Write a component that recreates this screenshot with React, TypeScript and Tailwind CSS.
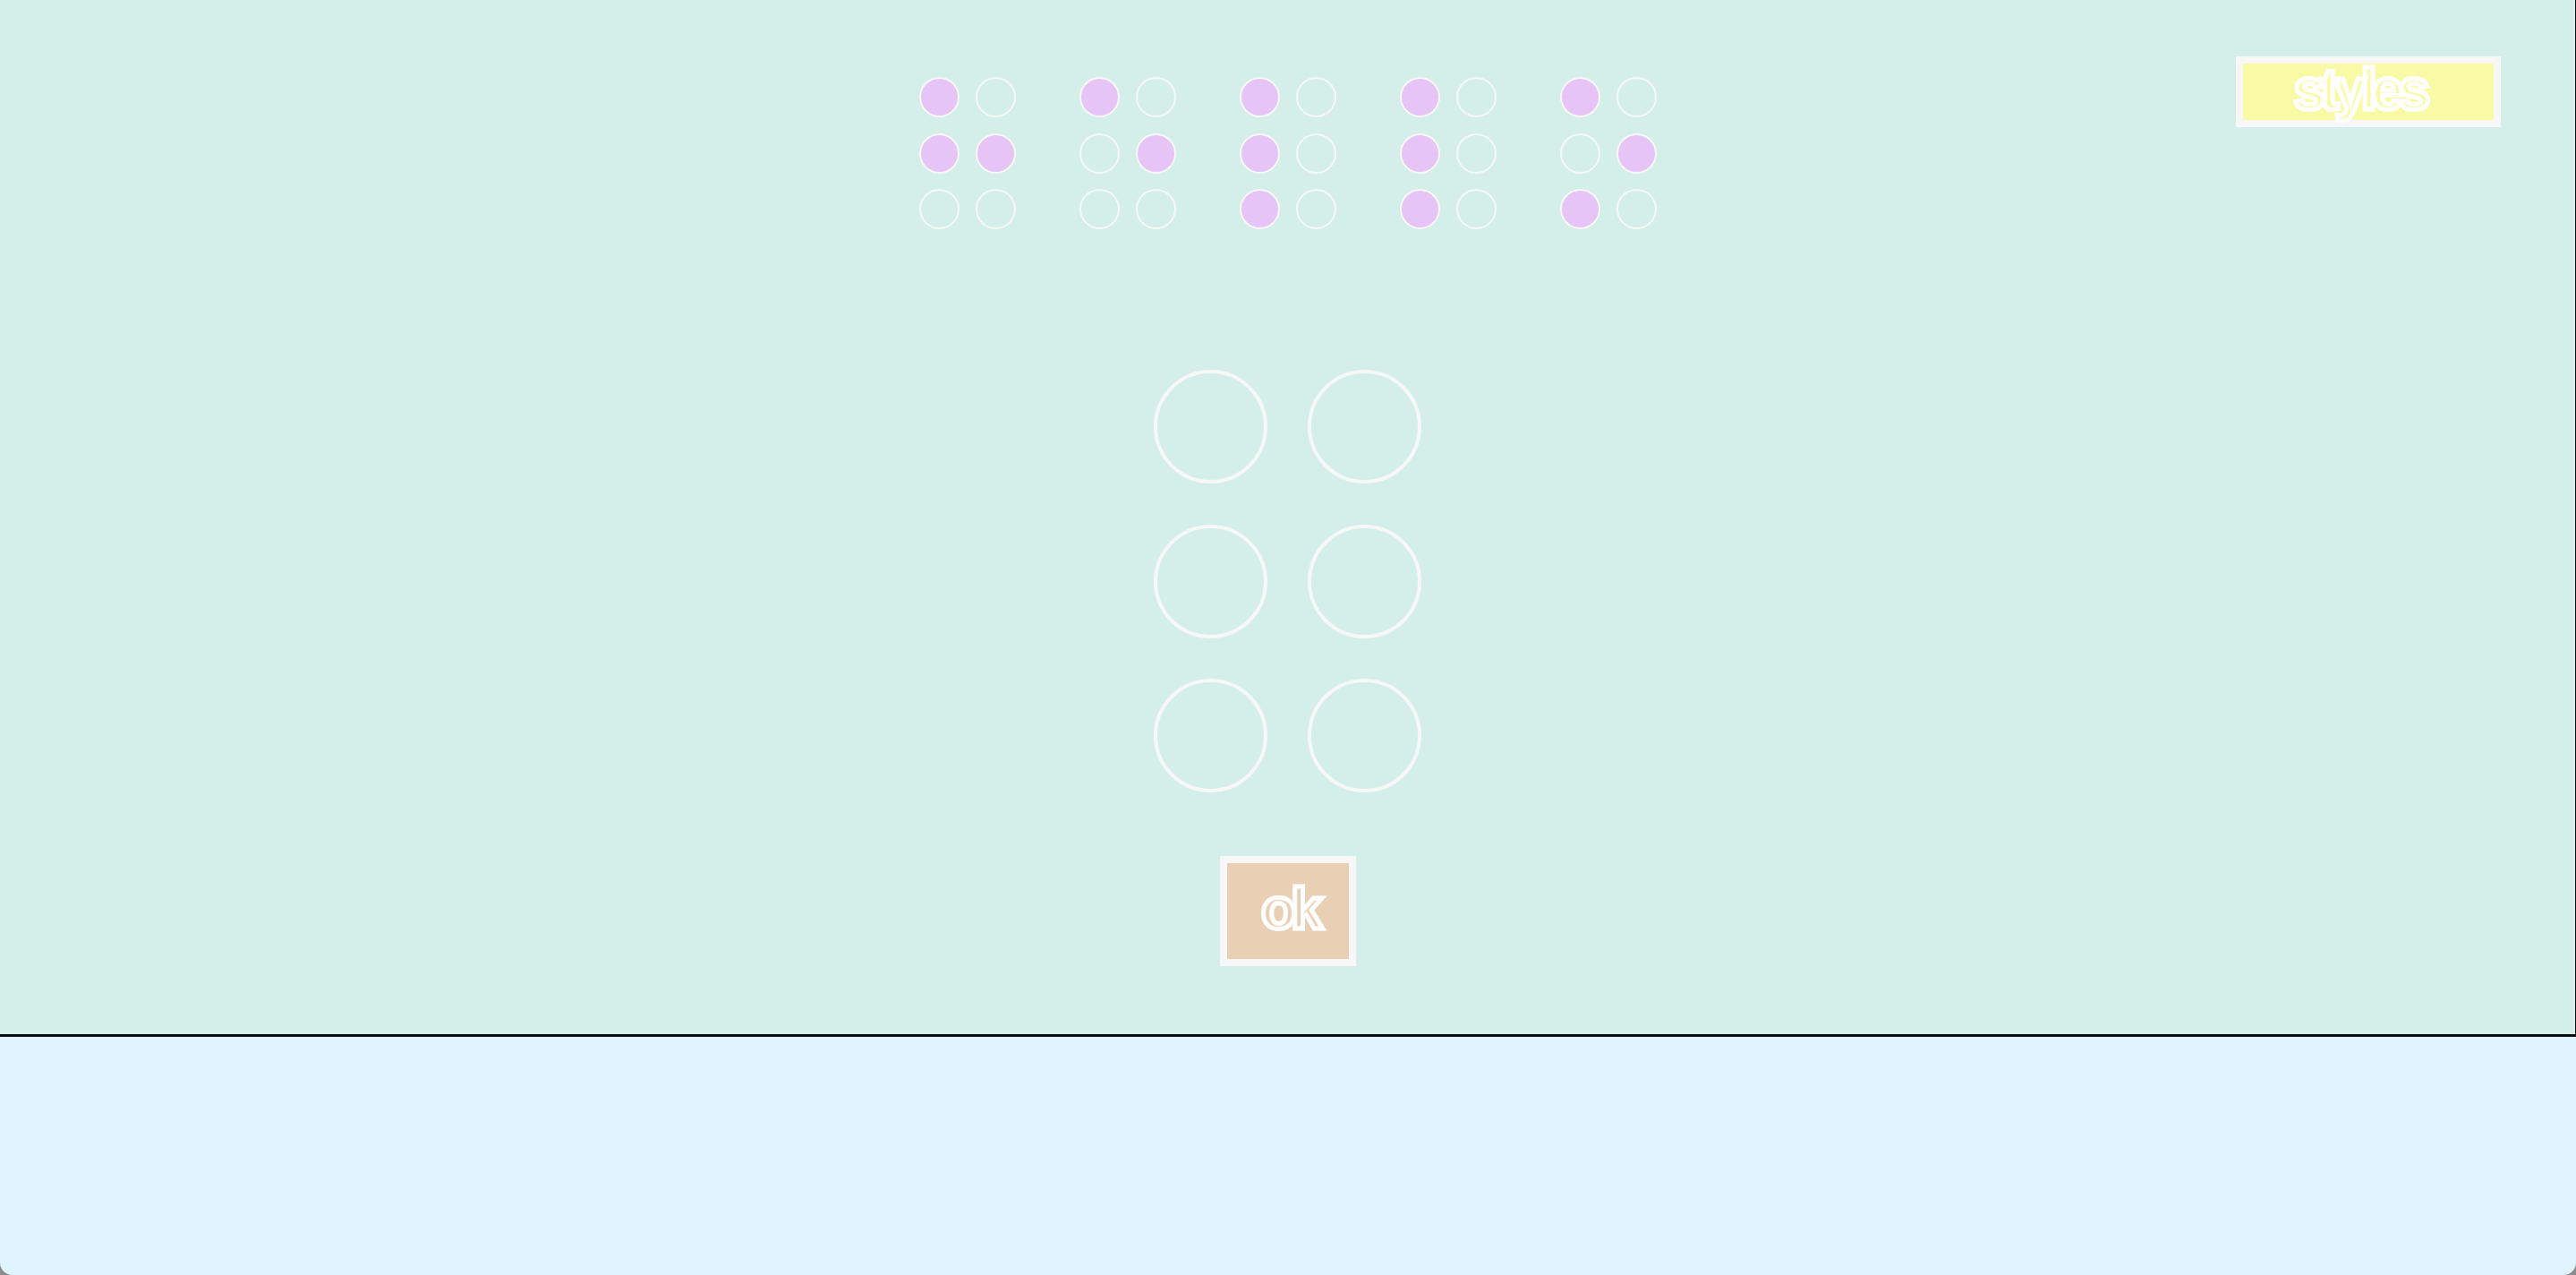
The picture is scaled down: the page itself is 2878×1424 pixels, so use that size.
import React from 'react';

// Braille cells shown across the top: each row is [left dot, right dot]
const CELLS: number[][][] = [
  [[1, 0], [1, 1], [0, 0]],
  [[1, 0], [0, 1], [0, 0]],
  [[1, 0], [1, 0], [1, 0]],
  [[1, 0], [1, 0], [1, 0]],
  [[1, 0], [0, 1], [1, 0]],
];

function Dot({ on }: { on: boolean }) {
  return (
    <div
      className={
        on
          ? 'w-[45px] h-[45px] rounded-full border-2 border-[#f7f7f7] bg-[#e6c5f6]'
          : 'w-[45px] h-[45px] rounded-full border-2 border-[#f7f7f7]'
      }
    />
  );
}

function Cell({ rows }: { rows: number[][] }) {
  return (
    <div className="grid grid-cols-2 gap-x-[18px] gap-y-[17.5px]">
      {rows.flat().map((v, i) => (
        <Dot key={i} on={v === 1} />
      ))}
    </div>
  );
}

const outlined =
  "font-['Liberation_Sans',Arial,sans-serif] font-bold text-[64px] tracking-[-0.09em] text-transparent [-webkit-text-stroke:5px_#ffffff]";

export default function App() {
  return (
    <div className="h-screen w-full bg-[#8c8c8c] flex flex-col">
      <div className="flex-1 flex flex-col rounded-b-[14px] overflow-hidden">
        <main className="h-[1158px] flex flex-col items-center bg-[#d4efe9] border-r border-b-[3px] border-[#0d0d0d]">
          <div className="w-full grid grid-cols-[1fr_auto_1fr] items-start">
            <div />
            <div className="mt-[86px] flex gap-[71px]">
              {CELLS.map((rows, i) => (
                <Cell key={i} rows={rows} />
              ))}
            </div>
            <div className="flex justify-end pr-[83px]">
              <button className="mt-[63px] w-[296px] h-[79px] border-[8px] border-[#f7f7f7] bg-[#f8faa5] flex items-center justify-center pb-[6px] pr-[20px] overflow-visible">
                <span className={outlined}>styles</span>
              </button>
            </div>
          </div>

          <div className="mt-[157px] grid grid-cols-2 gap-x-[45px] gap-y-[45.5px]">
            {Array.from({ length: 6 }).map((_, i) => (
              <div key={i} className="w-[127px] h-[127px] rounded-full border-4 border-[#f7f7f7]" />
            ))}
          </div>

          <button className="mt-[71px] w-[152px] h-[123px] border-[8px] border-[#f7f7f7] bg-[#e9d0b5] flex items-center justify-center pb-[6px] pl-[4px]">
            <span className={outlined}>ok</span>
          </button>
        </main>
        <div className="flex-1 bg-[#e0f4ff]" />
      </div>
    </div>
  );
}
